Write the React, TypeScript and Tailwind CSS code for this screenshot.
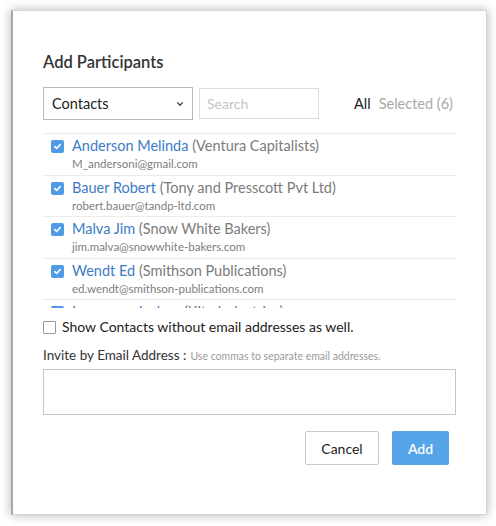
import React, { useState } from 'react';

type Participant = {
    name: string;
    company: string;
    email: string;
};

const participants: Participant[] = [
    { name: 'Anderson Melinda', company: 'Ventura Capitalists', email: 'M_andersoni@gmail.com' },
    { name: 'Bauer Robert', company: 'Tony and Presscott Pvt Ltd', email: 'robert.bauer@tandp-ltd.com' },
    { name: 'Malva Jim', company: 'Snow White Bakers', email: 'jim.malva@snowwhite-bakers.com' },
    { name: 'Wendt Ed', company: 'Smithson Publications', email: 'ed.wendt@smithson-publications.com' },
    { name: 'Lawrence Joshua', company: 'Kite Industries', email: 'joshua@kite-industries.com' },
];

const CheckBox: React.FC<{ checked: boolean }> = ({ checked }) =>
    checked ? (
        <span className="flex h-[13px] w-[13px] shrink-0 items-center justify-center rounded-[2px] bg-[#4f9be6]">
            <svg className="h-[9px] w-[9px]" viewBox="0 0 10 10" fill="none">
                <path d="M2 5.2l2 2 4-4.4" stroke="#fff" strokeWidth="1.8" strokeLinecap="round" strokeLinejoin="round" />
            </svg>
        </span>
    ) : (
        <span className="block h-[13px] w-[13px] shrink-0 rounded-[1px] border border-[#9a9a9a] bg-white" />
    );

const App: React.FC = () => {
    const [showAll] = useState(false);

    return (
        <div className="min-h-screen bg-white pl-[11px] pt-[10px]" style={{ fontFamily: 'Lato, "Open Sans", sans-serif' }}>
            <div className="flex h-[505px] w-[476px] flex-col border border-[#d4d4d4] border-l-2 border-l-[#a8a8a8] bg-white pl-[30px] pr-[30px] shadow-[0_0_10px_rgba(0,0,0,0.3)]">
                <h1 className="mt-[40px] text-[16.5px] font-semibold leading-[22px] text-[#333]">Add Participants</h1>

                <div className="mt-[14px] flex items-center">
                    <div className="flex h-[33px] w-[150px] items-center justify-between border border-[#b9b9b9] pl-[8px] pr-[8px] text-[14.5px] text-[#222]">
                        <span>Contacts</span>
                        <svg className="h-[8px] w-[8px]" viewBox="0 0 10 10" fill="none">
                            <path d="M2 3.5l3 3 3-3" stroke="#444" strokeWidth="1.6" strokeLinecap="round" strokeLinejoin="round" />
                        </svg>
                    </div>
                    <div className="ml-[6px] flex h-[31px] w-[120px] items-center border border-[#dcdcdc] pl-[7px] text-[14px] text-[#c4c4c4]">
                        Search
                    </div>
                    <div className="ml-auto flex items-center gap-[8px] pr-[3px] text-[14.5px]">
                        <span className="text-[#222]">All</span>
                        <span className="text-[#a9a9a9]">Selected (6)</span>
                    </div>
                </div>

                <div className="mt-[13px] h-[175px] shrink-0 overflow-hidden border-t border-[#ececec]">
                    {participants.map((p) => (
                        <div key={p.email} className="flex h-[41.5px] border-b border-[#ececec] pl-[8px] pt-[5px]">
                            <div className="pt-[1px]">
                                <CheckBox checked />
                            </div>
                            <div className="ml-[8px] -mt-[2px]">
                                <div className="text-[14.5px] leading-[18px] whitespace-nowrap">
                                    <span className="text-[#3c7cc5]">{p.name}</span>{' '}
                                    <span className="text-[#7b7b7b]">({p.company})</span>
                                </div>
                                <div className="mt-[1px] text-[11.5px] leading-[15px] text-[#7d7d7d]">{p.email}</div>
                            </div>
                        </div>
                    ))}
                </div>

                <label className="mt-[10px] flex items-center gap-[6px] text-[14px] leading-[18px] text-[#222]">
                    <CheckBox checked={showAll} />
                    <span>Show Contacts without email addresses as well.</span>
                </label>

                <div className="mt-[10px] flex items-baseline gap-[4px] leading-[18px]">
                    <span className="text-[13.5px] text-[#333]">Invite by Email Address :</span>
                    <span className="text-[10.5px] text-[#9a9a9a]">Use commas to separate email addresses.</span>
                </div>

                <textarea className="mt-[4px] h-[46px] w-full shrink-0 resize-none border border-[#c8c8c8] outline-none" />

                <div className="mt-[16px] flex justify-end gap-[13px] pr-[7px]">
                    <button className="h-[34px] w-[74px] rounded-[2px] border border-[#c9c9c9] bg-white text-[14px] text-[#222]">
                        Cancel
                    </button>
                    <button className="h-[34px] w-[57px] rounded-[2px] bg-[#56a5e9] text-[14px] font-semibold text-white">
                        Add
                    </button>
                </div>
            </div>
        </div>
    );
};

export default App;
